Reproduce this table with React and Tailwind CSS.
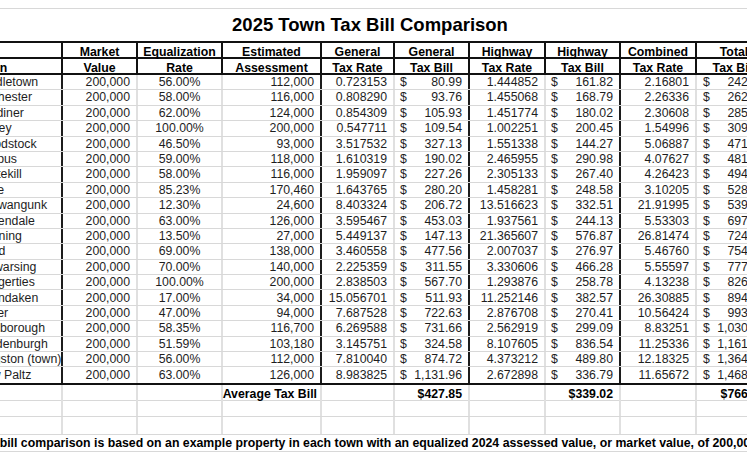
import React from 'react'

const cols = 'grid grid-cols-[90px_75px_85px_99px_73px_75px_76px_75px_76px_76px]'

const dark = 'border-r-2 border-r-[#1c1c1c]'
const light = 'border-r-2 border-r-[#e0e0e0]'
const dataLines = [dark, light, light, dark, light, dark, light, dark, light, dark]

const rows = [
  ['Middletown', '56.00%', '112,000', '0.723153', '80.99', '1.444852', '161.82', '2.16801', '242.81'],
  ['Rochester', '58.00%', '116,000', '0.808290', '93.76', '1.455068', '168.79', '2.26336', '262.55'],
  ['Gardiner', '62.00%', '124,000', '0.854309', '105.93', '1.451774', '180.02', '2.30608', '285.95'],
  ['Hurley', '100.00%', '200,000', '0.547711', '109.54', '1.002251', '200.45', '1.54996', '309.99'],
  ['Woodstock', '46.50%', '93,000', '3.517532', '327.13', '1.551338', '144.27', '5.06887', '471.40'],
  ['Esopus', '59.00%', '118,000', '1.610319', '190.02', '2.465955', '290.98', '4.07627', '481.00'],
  ['Plattekill', '58.00%', '116,000', '1.959097', '227.26', '2.305133', '267.40', '4.26423', '494.66'],
  ['Olive', '85.23%', '170,460', '1.643765', '280.20', '1.458281', '248.58', '3.10205', '528.78'],
  ['Shawangunk', '12.30%', '24,600', '8.403324', '206.72', '13.516623', '332.51', '21.91995', '539.23'],
  ['Rosendale', '63.00%', '126,000', '3.595467', '453.03', '1.937561', '244.13', '5.53303', '697.16'],
  ['Denning', '13.50%', '27,000', '5.449137', '147.13', '21.365607', '576.87', '26.81474', '724.00'],
  ['Lloyd', '69.00%', '138,000', '3.460558', '477.56', '2.007037', '276.97', '5.46760', '754.53'],
  ['Wawarsing', '70.00%', '140,000', '2.225359', '311.55', '3.330606', '466.28', '5.55597', '777.83'],
  ['Saugerties', '100.00%', '200,000', '2.838503', '567.70', '1.293876', '258.78', '4.13238', '826.48'],
  ['Shandaken', '17.00%', '34,000', '15.056701', '511.93', '11.252146', '382.57', '26.30885', '894.50'],
  ['Ulster', '47.00%', '94,000', '7.687528', '722.63', '2.876708', '270.41', '10.56424', '993.04'],
  ['Marlborough', '58.35%', '116,700', '6.269588', '731.66', '2.562919', '299.09', '8.83251', '1,030.75'],
  ['Hardenburgh', '51.59%', '103,180', '3.145751', '324.58', '8.107605', '836.54', '11.25336', '1,161.12'],
  ['Kingston (town)', '56.00%', '112,000', '7.810040', '874.72', '4.373212', '489.80', '12.18325', '1,364.52'],
  ['New Paltz', '63.00%', '126,000', '8.983825', '1,131.96', '2.672898', '336.79', '11.65672', '1,468.75'],
]

const head1 = ['', 'Market', 'Equalization', 'Estimated', 'General', 'General', 'Highway', 'Highway', 'Combined', 'Total']
const head2 = ['Town', 'Value', 'Rate', 'Assessment', 'Tax Rate', 'Tax Bill', 'Tax Rate', 'Tax Bill', 'Tax Rate', 'Tax Bill']

const Money = ({ value, line, pad = 'pl-[5px]' }) => (
  <div className={`${line} flex items-center justify-between ${pad} pr-[6px] whitespace-nowrap`}>
    <span>$</span>
    <span>{value}</span>
  </div>
)

const Num = ({ value, line }) => (
  <div className={`${line} flex items-center justify-end pr-[6px] whitespace-nowrap`}>{value}</div>
)

const HeadRow = ({ labels, className }) => (
  <div className={`${cols} ${className}`}>
    {labels.map((label, i) => (
      <div
        key={i}
        className={`border-r-2 border-r-[#111] flex items-center whitespace-nowrap ${i === 0 ? 'justify-start pl-[3px]' : 'justify-center'}`}
      >
        {label}
      </div>
    ))}
  </div>
)

const EmptyRow = ({ h, children }) => (
  <div className={`${cols} ${h} border-b border-[#d8d8d8]`}>
    {children ||
      head1.map((_, i) => <div key={i} className={light} />)}
  </div>
)

export default function App() {
  return (
    <div className="w-[747px] h-[467px] overflow-hidden bg-white text-[#1e1e1e] font-['Liberation_Sans',Arial,sans-serif] text-[12.3px]">
      <div className="h-[9px] border-b border-[#d8d8d8]" />
      <div className="h-[32px] flex items-center justify-center pr-[7px] text-[18.5px] font-bold text-black">
        2025 Town Tax Bill Comparison
      </div>

      <div className="-ml-[27px] w-[800px]">
        <div className="border-y-2 border-[#111] font-bold text-black">
          <HeadRow labels={head1} className="h-[16px] border-b-2 border-[#111]" />
          <HeadRow labels={head2} className="h-[14px]" />
        </div>

        <div className="border-b-2 border-[#111]">
          {rows.map((r, i) => (
            <div key={i} className={`${cols} h-[15.4px] border-b border-[#d8d8d8] last:border-b-0 leading-none`}>
              <div className={`${dataLines[0]} flex items-center pl-[3px] whitespace-nowrap overflow-hidden`}>{r[0]}</div>
              <Num value="200,000" line={dataLines[1]} />
              <div className={`${dataLines[2]} flex items-center justify-center`}>{r[1]}</div>
              <Num value={r[2]} line={dataLines[3]} />
              <Num value={r[3]} line={dataLines[4]} />
              <Money value={r[4]} line={dataLines[5]} />
              <Num value={r[5]} line={dataLines[6]} />
              <Money value={r[6]} line={dataLines[7]} />
              <Num value={r[7]} line={dataLines[8]} />
              <Money value={r[8]} line={dataLines[9]} pad="pl-[6px]" />
            </div>
          ))}
        </div>

        <EmptyRow h="h-[16px]">
          <div className={light} />
          <div className={light} />
          <div className={light} />
          <div className={`${light} flex items-center justify-end pr-[3px] font-bold text-black whitespace-nowrap`}>
            Average Tax Bill
          </div>
          <div className={light} />
          <div className={`${light} flex items-center justify-end pr-[6px] font-bold text-black`}>$427.85</div>
          <div className={light} />
          <div className={`${light} flex items-center justify-end pr-[6px] font-bold text-black`}>$339.02</div>
          <div className={light} />
          <div className={`${light} flex items-center justify-end pr-[6px] font-bold text-black`}>$766.87</div>
        </EmptyRow>
        <EmptyRow h="h-[16px]" />
        <EmptyRow h="h-[18px]" />

        <div className="h-[17px] border-b border-[#d8d8d8] flex items-center pl-[3px] font-bold text-black whitespace-nowrap">
          Tax bill comparison is based on an example property in each town with an equalized 2024 assessed value, or market value, of 200,000.
        </div>
      </div>
    </div>
  )
}
